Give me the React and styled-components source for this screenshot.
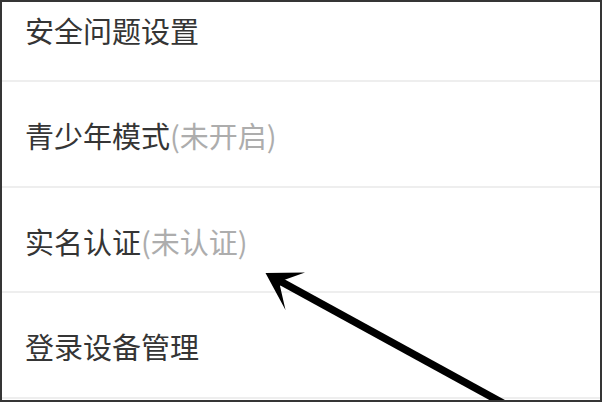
import React from 'react';
import styled, { createGlobalStyle } from 'styled-components';

const GlobalStyle = createGlobalStyle`
  html, body {
    margin: 0;
    padding: 0;
    background: #fff;
  }
  body {
    font-family: "Noto Sans CJK SC", "Noto Sans", sans-serif;
  }
`;

const Frame = styled.div`
  position: relative;
  width: 602px;
  height: 402px;
  box-sizing: border-box;
  border: 2px solid #353535;
  background: #fff;
  overflow: hidden;
`;

// first row is scrolled partly out of view
const List = styled.div`
  display: flex;
  flex-direction: column;
  margin-top: -25.5px;
`;

const Row = styled.div`
  display: flex;
  align-items: center;
  height: 99.5px;
  padding: 4px 0 0 23px;
  border-bottom: 2px solid #eeeeee;
`;

const Label = styled.span`
  font-size: 29px;
  line-height: 1;
  color: #353535;
  white-space: nowrap;
`;

const Status = styled.span`
  color: #adadad;
`;

const Overlay = styled.svg`
  position: absolute;
  top: -2px;
  left: -2px;
  pointer-events: none;
`;

const items = [
  { label: '安全问题设置' },
  { label: '青少年模式', status: '(未开启)' },
  { label: '实名认证', status: '(未认证)' },
  { label: '登录设备管理' },
];

const Arrow = () => (
  <Overlay width="602" height="402" viewBox="0 0 602 402">
    <line x1="279" y1="280.5" x2="530" y2="418" stroke="#000" strokeWidth="7.5" />
    <polygon points="265.5,273 305,272.5 284,280 280,286 285.5,310" fill="#000" />
  </Overlay>
);

export default function App() {
  return (
    <>
      <GlobalStyle />
      <Frame>
        <List>
          {items.map((it) => (
            <Row key={it.label}>
              <Label>
                {it.label}
                {it.status && <Status>{it.status}</Status>}
              </Label>
            </Row>
          ))}
        </List>
        <Arrow />
      </Frame>
    </>
  );
}
